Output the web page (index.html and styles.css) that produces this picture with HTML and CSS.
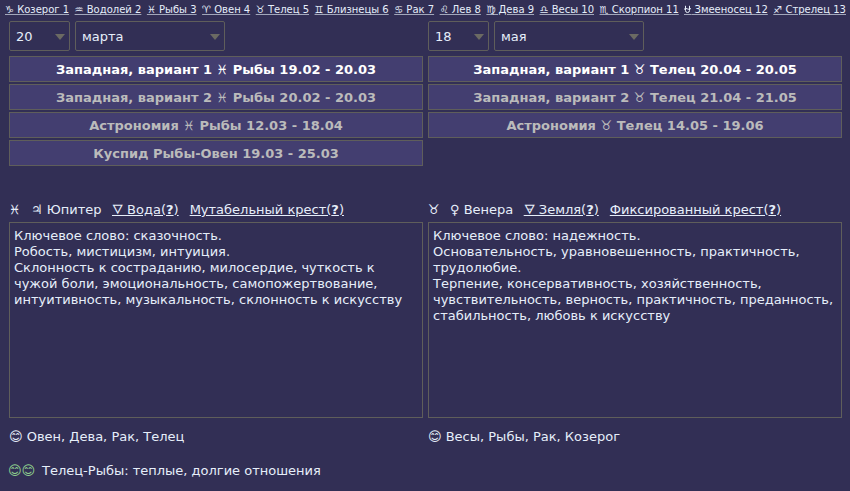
FILE: index.html
```html
<!DOCTYPE html>
<html lang="ru">
<head>
<meta charset="utf-8">
<title>Гороскоп</title>
<link rel="stylesheet" href="styles.css">
</head>
<body>
<nav class="signs">
<a>♑ Козерог 1</a><a>♒ Водолей 2</a><a>♓ Рыбы 3</a><a>♈ Овен 4</a><a>♉ Телец 5</a><a>♊ Близнецы 6</a><a>♋ Рак 7</a><a>♌ Лев 8</a><a>♍ Дева 9</a><a>♎ Весы 10</a><a>♏ Скорпион 11</a><a><svg class="ophiuchus" viewBox="0 0 7 10"><path d="M1.5 .8v4.7q0 2 2 2t2-2V.8M0 4.3q1.7-1.5 3.4-.4T7 3.5"/><path class="line" d="M0 9.5h7"/></svg> Змееносец 12</a><a>♐ Стрелец 13</a>
</nav>
<main class="columns">
<section class="person">
<div class="date"><div class="select day">20</div><div class="select month">марта</div></div>
<div class="variants">
<div class="variant active">Западная, вариант 1 ♓ Рыбы 19.02 - 20.03</div>
<div class="variant">Западная, вариант 2 ♓ Рыбы 20.02 - 20.03</div>
<div class="variant">Астрономия ♓ Рыбы 12.03 - 18.04</div>
<div class="variant">Куспид Рыбы-Овен 19.03 - 25.03</div>
</div>
<div class="traits"><span class="sign">♓</span><span class="planet">♃ Юпитер</span><a>🜄 Вода(<b>?</b>)</a><a>Мутабельный крест(<b>?</b>)</a></div>
<div class="description">Ключевое слово: сказочность.<br>Робость, мистицизм, интуиция.<br>Склонность к состраданию, милосердие, чуткость к чужой боли, эмоциональность, самопожертвование, интуитивность, музыкальность, склонность к искусству</div>
<div class="matches">😊 Овен, Дева, Рак, Телец</div>
</section>
<section class="person">
<div class="date"><div class="select day">18</div><div class="select month">мая</div></div>
<div class="variants">
<div class="variant active">Западная, вариант 1 ♉ Телец 20.04 - 20.05</div>
<div class="variant">Западная, вариант 2 ♉ Телец 21.04 - 21.05</div>
<div class="variant">Астрономия ♉ Телец 14.05 - 19.06</div>
</div>
<div class="traits"><span class="sign">♉</span><span class="planet">♀ Венера</span><a>🜃 Земля(<b>?</b>)</a><a>Фиксированный крест(<b>?</b>)</a></div>
<div class="description">Ключевое слово: надежность.<br>Основательность, уравновешенность, практичность, трудолюбие.<br>Терпение, консервативность, хозяйственность, чувствительность, верность, практичность, преданность, стабильность, любовь к искусству</div>
<div class="matches">😊 Весы, Рыбы, Рак, Козерог</div>
</section>
</main>
<footer class="result"><span class="faces">😊😊</span>Телец-Рыбы: теплые, долгие отношения</footer>
</body>
</html>
```
FILE: styles.css
```css
* { box-sizing: border-box; }
body {
  margin: 0;
  height: 491px;
  overflow: hidden;
  background: #322f55;
  color: #e6eefa;
  font: 13px/16px "DejaVu Sans", sans-serif;
}
.signs {
  display: flex;
  justify-content: space-between;
  height: 21px;
  padding: 3px 4px 0 5px;
  font-size: 10px;
  line-height: 13px;
  white-space: nowrap;
}
a { text-decoration: underline; }
.signs a { text-decoration-color: #a2a7bb; }
.ophiuchus {
  width: 7px;
  height: 10px;
  vertical-align: -2px;
  fill: none;
  stroke: #e6eefa;
}
.ophiuchus .line { stroke: #a2a7bb; }
.columns {
  display: grid;
  grid-template-columns: 414px 414px;
  gap: 5px;
  padding-left: 9px;
}
.date { display: flex; gap: 5px; height: 35px; }
.select {
  display: flex;
  align-items: center;
  justify-content: space-between;
  height: 30px;
  padding: 2px 4px 0 6px;
  border: 1px solid #5f5e5b;
  border-radius: 2px;
}
.select::after {
  content: "";
  border: 5px solid transparent;
  border-top: 6px solid #6b6a63;
  border-bottom: 0;
}
.day { width: 61px; }
.month { width: 150px; }
.variants {
  display: flex;
  flex-direction: column;
  gap: 2px;
  height: 146px;
}
.variant {
  height: 26px;
  padding-top: 1px;
  border: 1px solid #5f5e5b;
  background: #433e70;
  color: #bbb;
  font-weight: bold;
  line-height: 24px;
  text-align: center;
}
.active { color: #fff; }
.traits { display: flex; height: 20px; white-space: nowrap; }
.sign { width: 22px; }
.planet { margin-right: 10.4px; }
.traits a + a { margin-left: 11px; }
.description {
  height: 196px;
  padding: 5px 4px;
  border: 1px solid #5f5e5b;
}
.matches { margin-top: 11px; }
.result { display: flex; padding: 18px 0 0 9px; }
.faces { width: 33px; margin-left: -1px; margin-right: 1px; color: #8fcf8f; }
```
